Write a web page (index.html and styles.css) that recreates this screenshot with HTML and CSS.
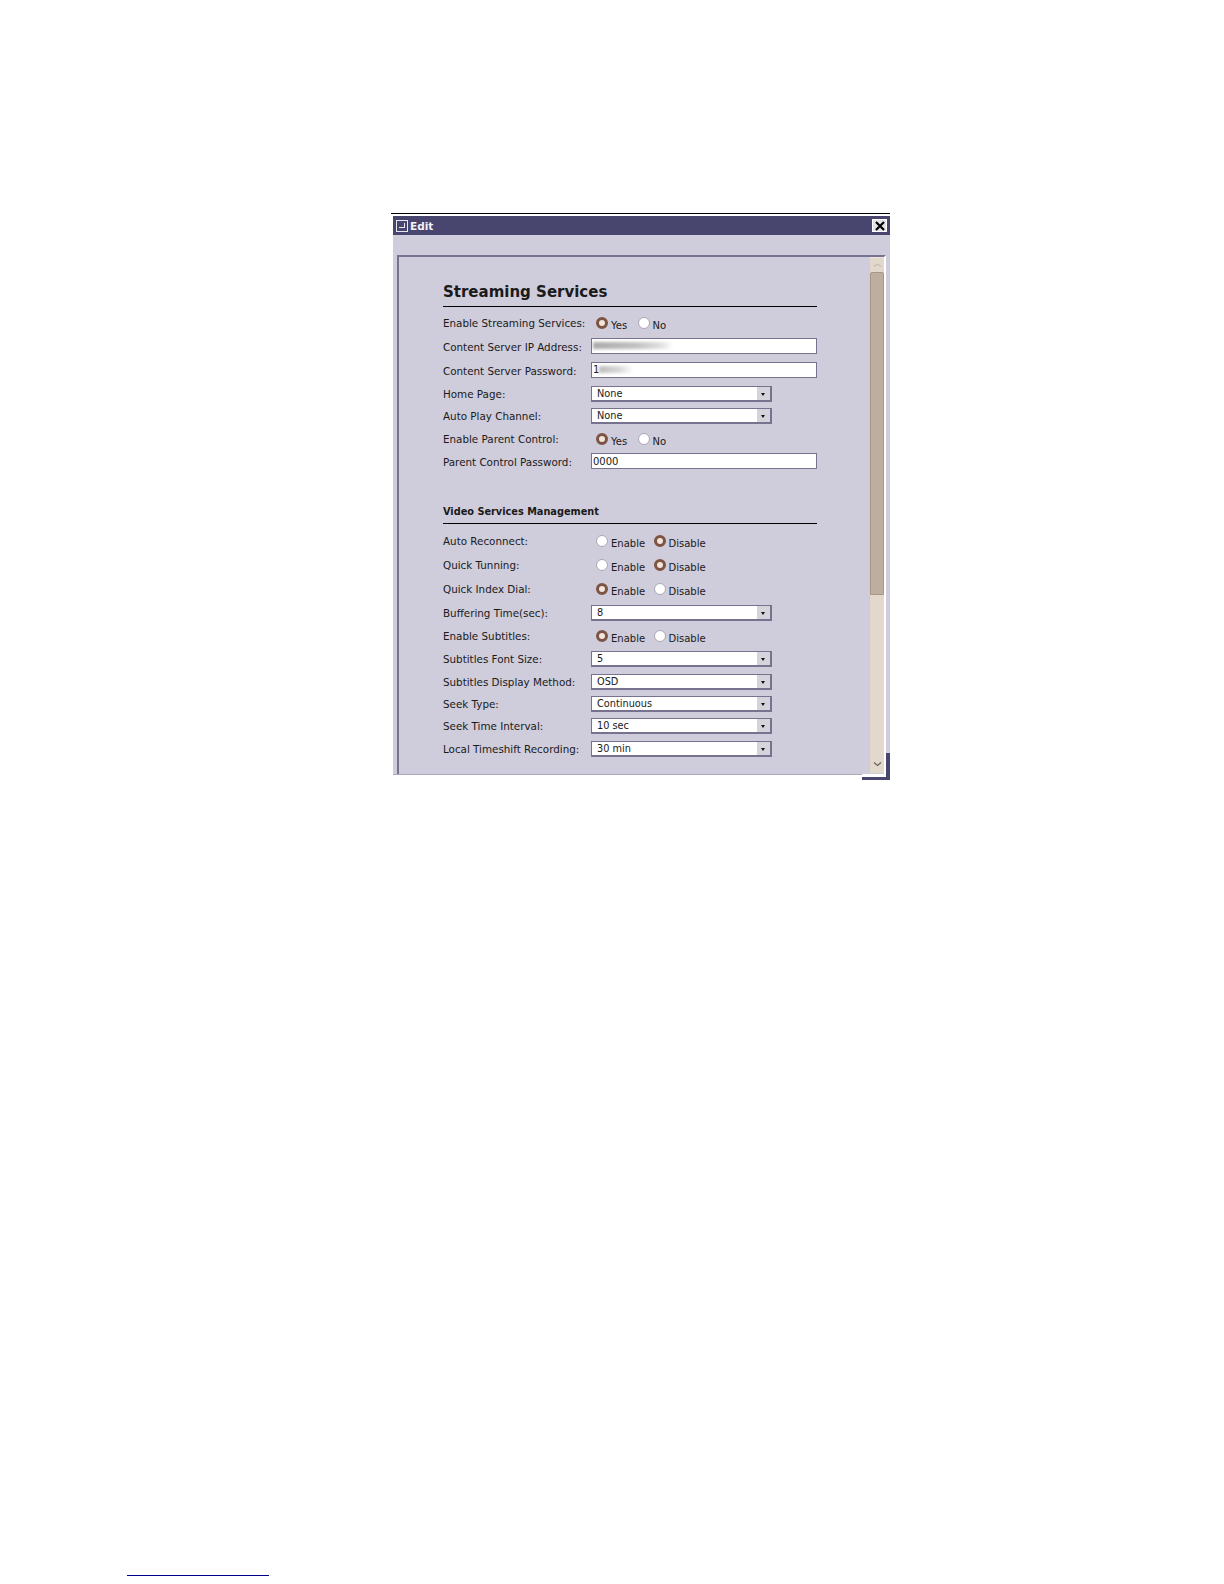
FILE: index.html
```html
<!DOCTYPE html>
<html lang="en">
<head>
  <meta charset="UTF-8">
  <title>Edit</title>
  <link rel="stylesheet" href="styles.css">
</head>
<body>

  <!-- Edit dialog -->
  <div class="window">
    <div class="titlebar">
      <span class="title-icon"><span></span></span>
      <span class="title-text">Edit</span>
      <span class="close-btn">
        <svg width="12" height="12" viewBox="0 0 12 12"><path d="M2 2 L10 10 M10 2 L2 10" stroke="#000" stroke-width="2.2" fill="none"/></svg>
      </span>
    </div>

    <div class="panel">
      <div class="content">
        <h1>Streaming Services</h1>

        <div class="row">
          <label>Enable Streaming Services:</label>
          <div class="radios"><i class="radio on"></i><span class="opt-short">Yes</span><i class="radio"></i><span>No</span></div>
        </div>
        <div class="row field">
          <label>Content Server IP Address:</label>
          <div class="input"><span class="smudge wide"></span></div>
        </div>
        <div class="row field">
          <label>Content Server Password:</label>
          <div class="input">1<span class="smudge"></span></div>
        </div>
        <div class="row tight">
          <label>Home Page:</label>
          <div class="select"><span>None</span><b></b></div>
        </div>
        <div class="row tight">
          <label>Auto Play Channel:</label>
          <div class="select"><span>None</span><b></b></div>
        </div>
        <div class="row">
          <label>Enable Parent Control:</label>
          <div class="radios"><i class="radio on"></i><span class="opt-short">Yes</span><i class="radio"></i><span>No</span></div>
        </div>
        <div class="row field">
          <label>Parent Control Password:</label>
          <div class="input">0000</div>
        </div>

        <h2>Video Services Management</h2>

        <div class="row wide-row">
          <label>Auto Reconnect:</label>
          <div class="radios"><i class="radio"></i><span class="opt">Enable</span><i class="radio on"></i><span>Disable</span></div>
        </div>
        <div class="row wide-row">
          <label>Quick Tunning:</label>
          <div class="radios"><i class="radio"></i><span class="opt">Enable</span><i class="radio on"></i><span>Disable</span></div>
        </div>
        <div class="row wide-row">
          <label>Quick Index Dial:</label>
          <div class="radios"><i class="radio on"></i><span class="opt">Enable</span><i class="radio"></i><span>Disable</span></div>
        </div>
        <div class="row">
          <label>Buffering Time(sec):</label>
          <div class="select"><span>8</span><b></b></div>
        </div>
        <div class="row">
          <label>Enable Subtitles:</label>
          <div class="radios"><i class="radio on"></i><span class="opt">Enable</span><i class="radio"></i><span>Disable</span></div>
        </div>
        <div class="row">
          <label>Subtitles Font Size:</label>
          <div class="select"><span>5</span><b></b></div>
        </div>
        <div class="row tight">
          <label>Subtitles Display Method:</label>
          <div class="select"><span>OSD</span><b></b></div>
        </div>
        <div class="row tight">
          <label>Seek Type:</label>
          <div class="select"><span>Continuous</span><b></b></div>
        </div>
        <div class="row tight">
          <label>Seek Time Interval:</label>
          <div class="select"><span>10 sec</span><b></b></div>
        </div>
        <div class="row tight">
          <label>Local Timeshift Recording:</label>
          <div class="select"><span>30 min</span><b></b></div>
        </div>
      </div>

      <!-- Scrollbar -->
      <div class="scrollbar">
        <div class="scroll-btn">
          <svg width="9" height="6" viewBox="0 0 9 6"><path d="M1 4.5 L4.5 2 L8 4.5" stroke="#c9bdb0" stroke-width="1.2" fill="none"/></svg>
        </div>
        <div class="thumb"></div>
        <div class="scroll-btn bottom">
          <svg width="9" height="6" viewBox="0 0 9 6"><path d="M1 1.5 L4.5 4.5 L8 1.5" stroke="#6b6258" stroke-width="1.2" fill="none"/></svg>
        </div>
      </div>
    </div>

    <div class="bottom-edge"></div>
    <div class="corner-right"></div>
    <div class="corner-bottom"></div>
  </div>

  <!-- Footnote rule -->
  <div class="footnote-rule"></div>

</body>
</html>
```

FILE: styles.css
```css
* {
  margin: 0;
  padding: 0;
  box-sizing: border-box;
}

body {
  font-family: "DejaVu Sans", Verdana, sans-serif;
  background-color: #fff;
  color: #1a1a1a;
  width: 1224px;
  height: 1584px;
  overflow: hidden;
  padding-top: 213px;
}

/* Dialog */
.window {
  position: relative;
  width: 499px;
  height: 567px;
  margin-left: 391px;
  padding: 2px 0 0 2px;
  border-top: 1px solid #000;
  background-color: #cfccdb;
  background-clip: content-box;
}

.titlebar {
  display: flex;
  align-items: center;
  height: 19px;
  background-color: #48456f;
  padding: 0 3px 0 3px;
}

.title-icon {
  display: flex;
  align-items: center;
  justify-content: center;
  width: 12px;
  height: 12px;
  border: 1px solid #e6e6ee;
}

.title-icon span {
  width: 6px;
  height: 5px;
  border: 1px solid #e6e6ee;
  border-top: none;
  border-left: none;
}

.title-text {
  margin-left: 2px;
  color: #f2f2f7;
  font-size: 10.5px;
  font-weight: bold;
}

.close-btn {
  display: flex;
  align-items: center;
  justify-content: center;
  margin-left: auto;
  width: 15px;
  height: 13px;
  background-color: #e4e3ea;
  border: 1px solid #fff;
}

/* Inner panel */
.panel {
  display: flex;
  height: 522px;
  margin: 20px 4px 0 4px;
  border-top: 2px solid #77738f;
  border-left: 2px solid #77738f;
  border-right: 2px solid #fff;
  border-bottom: 3px solid #fff;
}

.content {
  flex: 1;
  padding: 21px 0 0 44px;
  overflow: hidden;
}

h1 {
  width: 374px;
  height: 29px;
  font-size: 15px;
  line-height: 28px;
  border-bottom: 1px solid #000;
  margin-bottom: 4.5px;
}

h2 {
  width: 374px;
  height: 19px;
  margin: 31px 0 4.5px;
  font-size: 9.75px;
  line-height: 14px;
  border-bottom: 1px solid #000;
}

/* Form rows */
.row {
  display: flex;
  align-items: center;
  height: 23px;
  font-size: 10.35px;
}

.row.field {
  height: 24px;
}

.row.tight {
  height: 22.3px;
}

.row.wide-row {
  height: 24.3px;
}

.row label {
  width: 148px;
  flex-shrink: 0;
}

.input {
  display: flex;
  align-items: center;
  width: 226px;
  height: 16px;
  margin-bottom: 1.5px;
  padding-left: 1px;
  background-color: #fff;
  border: 1px solid #77738f;
  font-size: 10px;
  overflow: hidden;
}

.smudge {
  display: block;
  width: 34px;
  height: 7px;
  background: linear-gradient(90deg, #bdbdbd, #d8d8d8 60%, #fff);
  filter: blur(1.5px);
}

.smudge.wide {
  width: 80px;
  height: 7px;
  background: linear-gradient(90deg, #aaa, #c2c2c2 55%, #e0e0e0 85%, #fff);
}

.select {
  display: flex;
  align-items: center;
  justify-content: space-between;
  width: 181px;
  height: 16px;
  padding-left: 5px;
  background-color: #fff;
  border: 1px solid #77738f;
  border-right-width: 2px;
  border-bottom-width: 2px;
  font-size: 9.75px;
}

.select b {
  position: relative;
  width: 13px;
  height: 100%;
  background-color: #d5d4dc;
}

.select b::after {
  content: "";
  position: absolute;
  left: 4px;
  top: 6px;
  border-top: 3px solid #111;
  border-left: 2.5px solid transparent;
  border-right: 2.5px solid transparent;
}

/* Radio groups */
.radios {
  display: flex;
  align-items: flex-start;
  height: 12px;
  padding-left: 5px;
  font-size: 10px;
}

.radios span {
  margin: 3px 0 0 3px;
  line-height: 12px;
}

.radios .opt-short {
  width: 26.5px;
}

.radios .opt {
  width: 42.5px;
}

.radio {
  display: block;
  width: 12px;
  height: 12px;
  border-radius: 50%;
  background-color: #fff;
  border: 1px solid #a9a7b8;
}

.radio.on {
  background-color: #efe6dc;
  border: 3px solid #7d5443;
}

/* Scrollbar */
.scrollbar {
  display: flex;
  flex-direction: column;
  flex-shrink: 0;
  width: 15px;
  margin-bottom: 1px;
  background-color: #e2d8cc;
  border-left: 1px solid #d6cbbf;
  border-top: 1px solid #ece5dc;
}

.scroll-btn {
  display: flex;
  align-items: center;
  justify-content: center;
  height: 14px;
  flex-shrink: 0;
}

.scroll-btn.bottom {
  margin-top: auto;
  height: 18px;
}

.thumb {
  height: 323px;
  background-color: #bdae9f;
  border: 1px solid #a89686;
  border-radius: 2px 2px 0 0;
}

/* Edges at the bottom of the dialog */
.bottom-edge {
  position: absolute;
  left: 2px;
  right: 28px;
  bottom: 0;
  height: 6px;
  background-color: #fff;
  border-top: 1px solid #a9a7bd;
}

.corner-right {
  position: absolute;
  right: 0;
  bottom: 0;
  width: 4px;
  height: 27px;
  background-color: #48456f;
}

.corner-bottom {
  position: absolute;
  right: 0;
  bottom: 0;
  width: 28px;
  height: 3px;
  background-color: #48456f;
}

.footnote-rule {
  width: 142px;
  height: 1px;
  margin: 795px 0 0 127px;
  background-color: #00008b;
}
```
